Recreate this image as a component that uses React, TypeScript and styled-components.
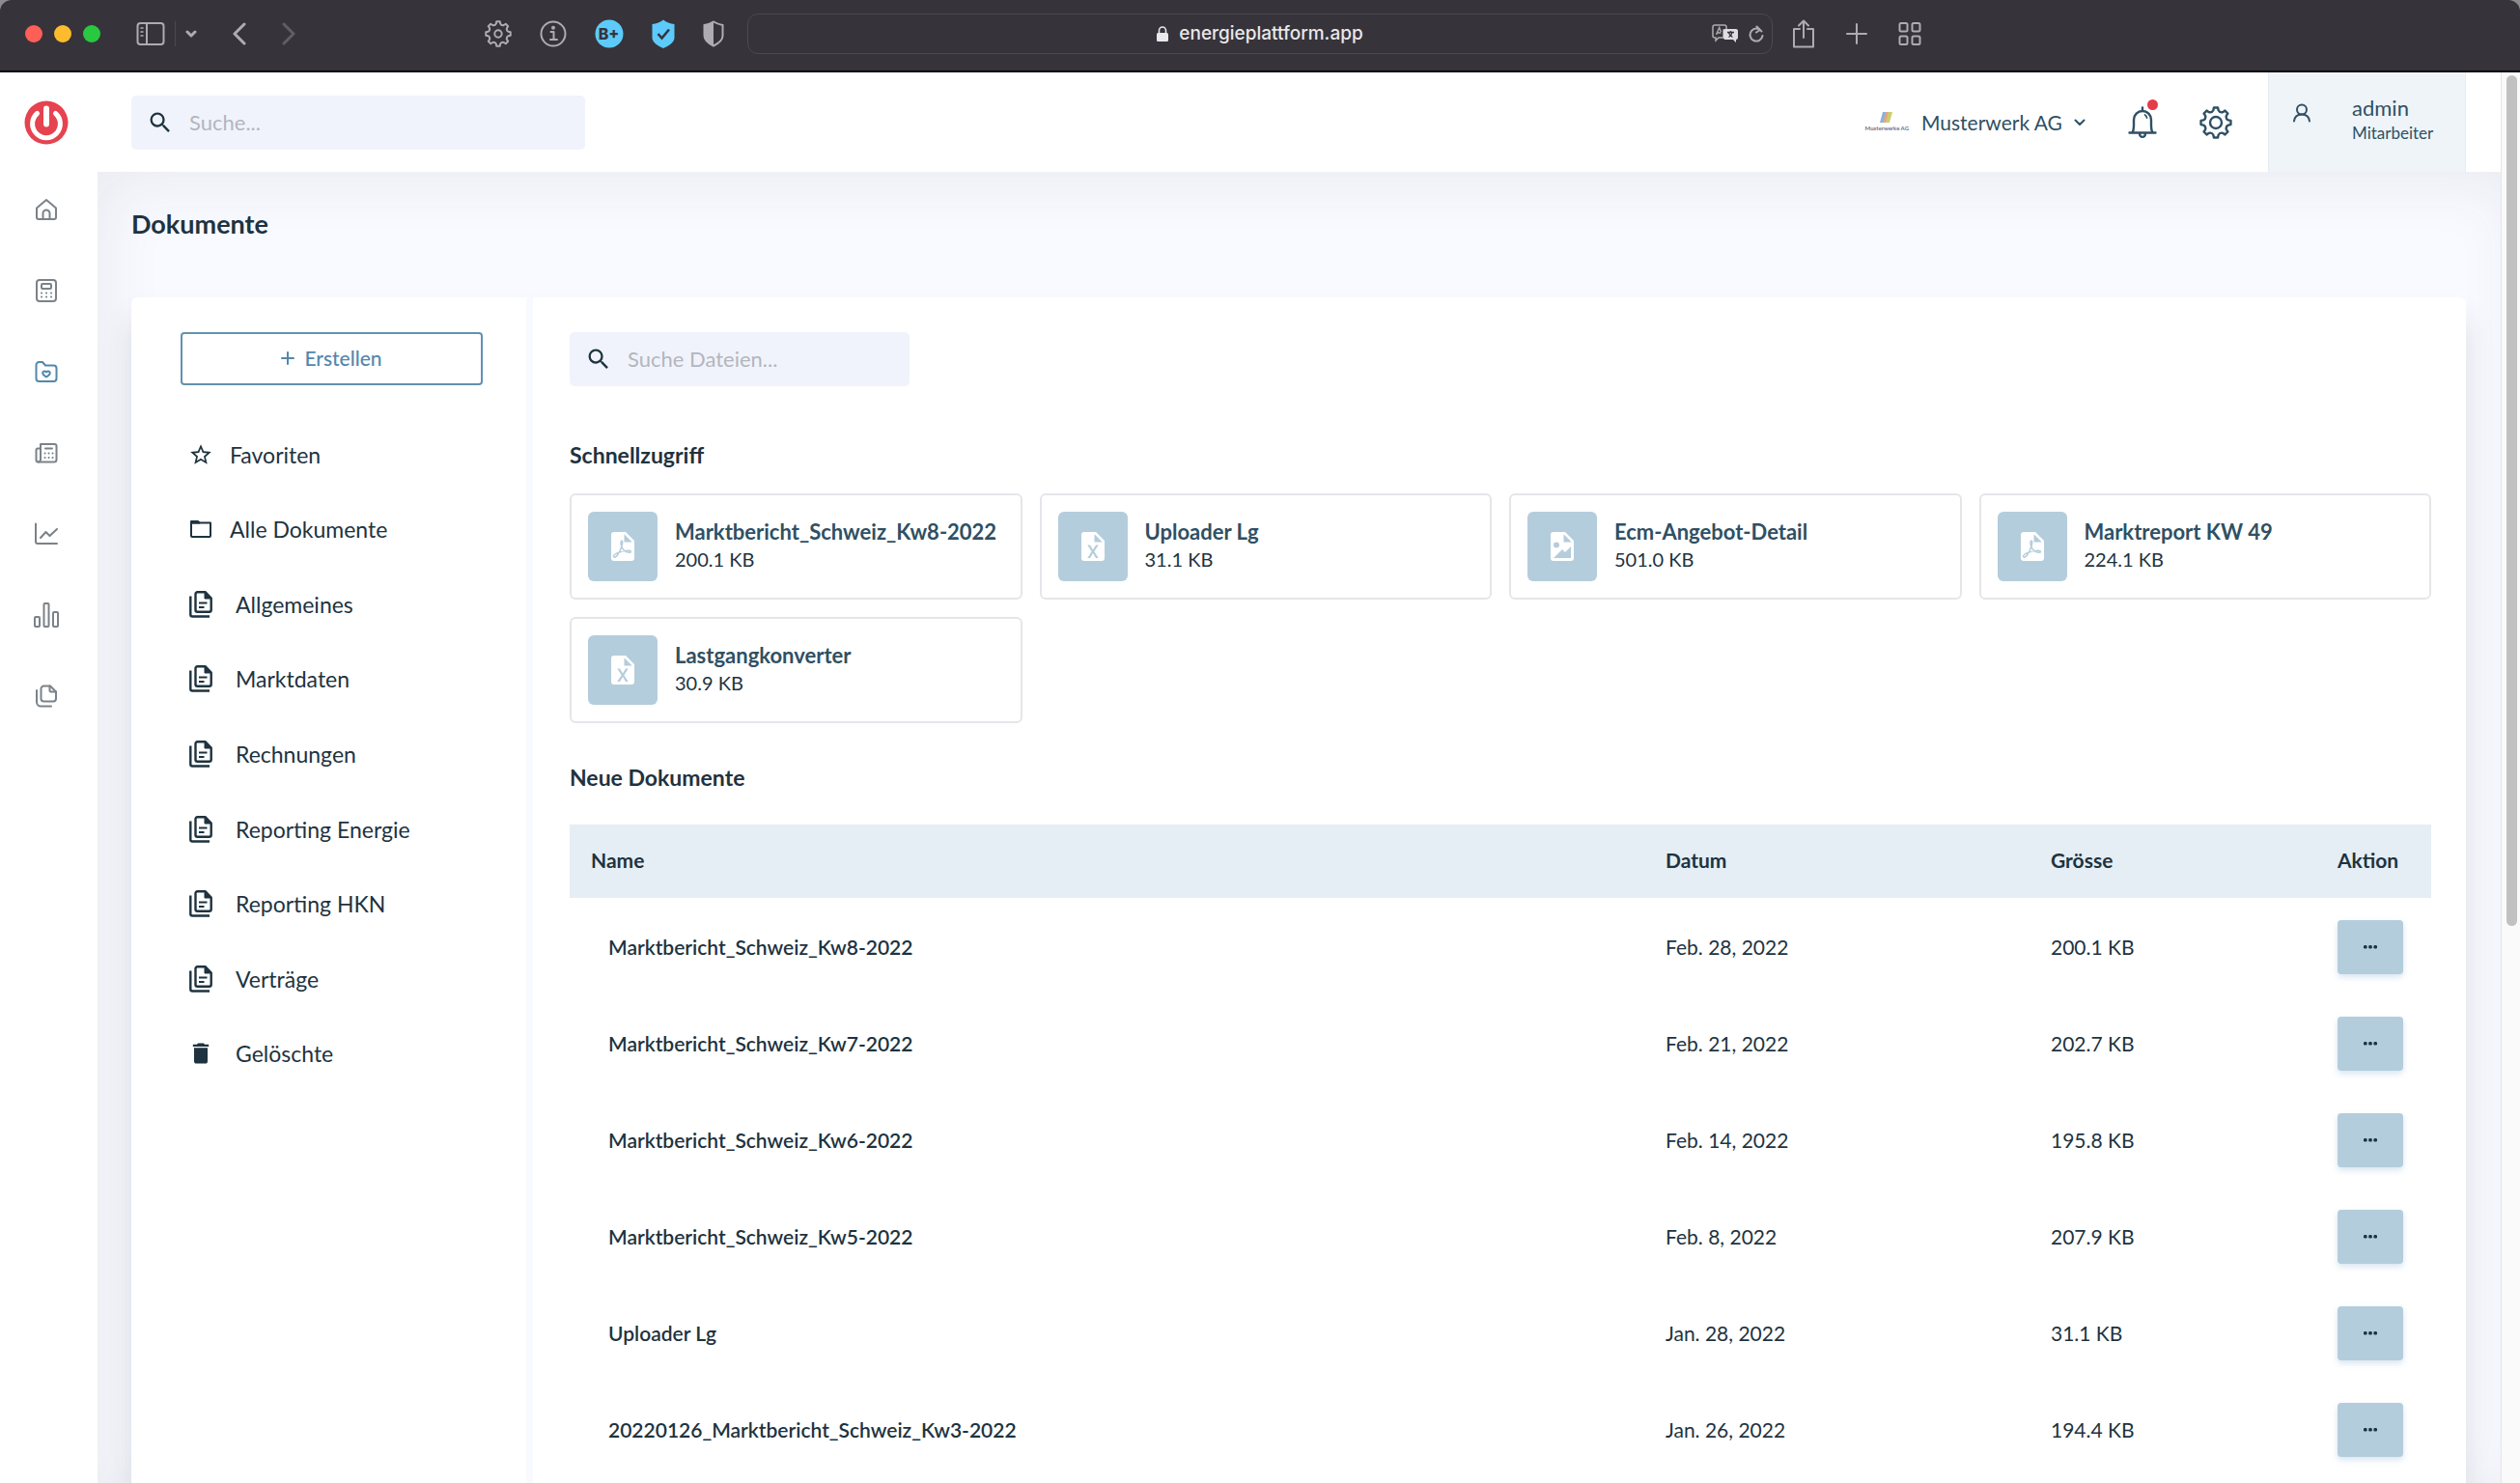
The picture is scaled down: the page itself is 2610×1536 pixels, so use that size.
import React from "react";
import styled, { createGlobalStyle } from "styled-components";
import { MdDelete, MdSearch, MdStarBorder } from "react-icons/md";

const color = {
  ink: "#1e333f",
  slate: "#2f5064",
  accent: "#5288ab",
  tile: "#b4cddc",
  field: "#f0f3fb",
  muted: "#b3b6be",
  chrome: "#37333a",
  chromeIcon: "#aeacb1",
};

const Global = createGlobalStyle`
  * { box-sizing: border-box; }
  body {
    margin: 0;
    background: #8d8b90;
    color: ${color.ink};
    font-family: Lato, "Open Sans", sans-serif;
  }
  button, input, select { font: inherit; color: inherit; }
  h1, h2, ul { margin: 0; padding: 0; }
`;

/* ---------- browser window ---------- */

const Window = styled.div`
  display: flex;
  flex-direction: column;
  height: 100vh;
  overflow: hidden;
`;

const Chrome = styled.header`
  display: grid;
  grid-template-columns: minmax(0, 1fr) minmax(0, 1062px) minmax(0, 1fr);
  align-items: center;
  flex: none;
  height: 75px;
  padding-bottom: 4px;
  background: ${color.chrome};
  border-bottom: 2px solid #060507;
  border-radius: 12px 12px 0 0;
  color: ${color.chromeIcon};
`;

const ChromeSide = styled.div<{ $end?: boolean }>`
  display: flex;
  align-items: center;
  justify-content: ${(p) => (p.$end ? "flex-start" : "space-between")};
  gap: 32px;
  padding: 0 24px 0 ${(p) => (p.$end ? "20px" : "26px")};
`;

const Cluster = styled.div<{ $gap: number }>`
  display: flex;
  align-items: center;
  gap: ${(p) => p.$gap}px;
`;

const Light = styled.button<{ $color: string }>`
  width: 18px;
  height: 18px;
  padding: 0;
  border: 0;
  border-radius: 50%;
  background: ${(p) => p.$color};
`;

const IconButton = styled.button<{ $dim?: boolean }>`
  display: flex;
  position: relative;
  padding: 0;
  border: 0;
  background: none;
  color: inherit;
  opacity: ${(p) => (p.$dim ? 0.35 : 1)};
`;

const Rule = styled.span`
  width: 1px;
  height: 26px;
  background: #4b484f;
`;

const Address = styled.div`
  display: grid;
  grid-template-columns: 1fr auto 1fr;
  align-items: center;
  height: 42px;
  padding: 0 8px;
  border: 1px solid #4b4850;
  border-radius: 11px;
`;

const AddressText = styled.span`
  display: flex;
  align-items: center;
  gap: 11px;
  grid-column: 2;
  color: #e9e8ea;
  font: 500 19px/24px Inter, sans-serif;
`;

const AddressTools = styled(Cluster)`
  justify-self: end;
`;

/* ---------- application shell ---------- */

const Shell = styled.div`
  display: flex;
  flex: 1;
  min-height: 0;
  background: #fff;
`;

const Rail = styled.nav`
  display: flex;
  flex-direction: column;
  align-items: center;
  flex: none;
  width: 101px;
  padding: 29px 6px 0 0;
  color: #7b8289;
`;

const RailList = styled.ul`
  display: flex;
  flex-direction: column;
  align-items: center;
  gap: 60px;
  padding-top: 55px;
  list-style: none;
`;

const RailLink = styled.a<{ $active?: boolean }>`
  display: flex;
  align-items: center;
  height: 24px;
  color: ${(p) => (p.$active ? color.accent : "inherit")};
`;

const Content = styled.div`
  display: flex;
  flex-direction: column;
  flex: 1;
  min-width: 0;
`;

const TopBar = styled.header`
  display: flex;
  align-items: center;
  flex: none;
  height: 103px;
  padding: 0 36px 0 35px;
  color: ${color.slate};
`;

const SearchField = styled.label<{ $width: number }>`
  display: flex;
  align-items: center;
  gap: 16px;
  width: ${(p) => p.$width}px;
  height: 56px;
  padding: 0 16px;
  border-radius: 5px;
  background: ${color.field};
  color: ${color.ink};

  svg { flex: none; }
`;

const SearchInput = styled.input`
  flex: 1;
  min-width: 0;
  padding: 0;
  border: 0;
  outline: 0;
  background: none;
  font-size: 22px;
  line-height: 28px;

  &::placeholder { color: ${color.muted}; opacity: 1; }
`;

const TopTools = styled.div`
  display: flex;
  align-items: center;
  gap: 44px;
  margin: 0 37px 0 auto;
`;

const Company = styled.label`
  display: flex;
  align-items: center;
  gap: 13px;
`;

const CompanyLogo = styled.span`
  display: flex;
  flex-direction: column;
  align-items: center;
  gap: 2px;
  font-size: 6px;
  line-height: 8px;
  font-weight: 700;
  white-space: nowrap;
  color: #6b6f8c;
`;

const SelectBox = styled.span`
  display: flex;
  align-items: center;
  gap: 11px;
`;

const CompanySelect = styled.select`
  appearance: none;
  padding: 0;
  border: 0;
  background: none;
  font-size: 21px;
  line-height: 28px;
`;

const Dot = styled.span`
  position: absolute;
  top: -7px;
  right: -1px;
  width: 11px;
  height: 11px;
  border-radius: 50%;
  background: #e53c48;
`;

const User = styled.a`
  display: flex;
  gap: 42px;
  align-self: stretch;
  width: 205px;
  padding: 24px 24px 0;
  border: solid #e6ecf1;
  border-width: 0 1px;
  background: #eef4f8;
  color: ${color.slate};
  text-decoration: none;

  svg { flex: none; margin-top: 8px; }
`;

const UserText = styled.span`
  display: flex;
  flex-direction: column;
  font-size: 17px;
  line-height: 26px;
`;

const UserName = styled.span`
  font-size: 22px;
`;

const Page = styled.main`
  display: flex;
  flex-direction: column;
  flex: 1;
  min-height: 0;
  padding: 0 36px 0 35px;
  background: #f9faff;
  box-shadow: inset 12px 14px 60px rgba(40, 50, 70, 0.07);
`;

const PageTitle = styled.h1`
  padding: 37px 0 59px;
  font-size: 27px;
  line-height: 34px;
  font-weight: 700;
`;

const Card = styled.div`
  display: flex;
  flex: 1;
  min-height: 0;
  border-radius: 6px 6px 0 0;
  background: #fff;
  box-shadow: 0 24px 32px rgba(30, 40, 55, 0.13);
`;

const Side = styled.aside`
  flex: none;
  width: 416px;
  padding: 36px 45px 0 51px;
  border-right: 7px solid #f9faff;
`;

const CreateButton = styled.button`
  display: flex;
  align-items: center;
  justify-content: center;
  gap: 10px;
  width: 313px;
  height: 55px;
  padding: 0 0 2px;
  border: 2px solid #6391b0;
  border-radius: 4px;
  background: #fff;
  color: ${color.accent};
  font-size: 21px;
  line-height: 28px;
  font-weight: 500;
`;

const FolderList = styled.ul`
  display: grid;
  grid-template-rows: repeat(9, 1fr);
  height: 698px;
  margin-top: 33px;
  padding-left: 9px;
  list-style: none;
`;

const FolderLink = styled.a<{ $wide?: boolean }>`
  display: flex;
  align-items: center;
  gap: ${(p) => (p.$wide ? 24 : 18)}px;
  height: 100%;
  color: ${color.ink};
  font-size: 23px;
  line-height: 30px;
  text-decoration: none;
`;

const FolderGlyph = styled.span`
  display: flex;
  justify-content: center;
  flex: none;
  width: 24px;

  svg { flex: none; }
`;

const Main = styled.section`
  flex: 1;
  min-width: 0;
  padding: 36px 36px 0 38px;
`;

const SectionTitle = styled.h2<{ $first?: boolean }>`
  padding: ${(p) => (p.$first ? "56px" : "41px")} 0 ${(p) => (p.$first ? "25px" : "34px")};
  font-size: 23px;
  line-height: 30px;
  font-weight: 700;
`;

const QuickGrid = styled.div`
  display: grid;
  grid-template-columns: repeat(4, minmax(0, 1fr));
  gap: 18px;
`;

const QuickCard = styled.a`
  display: flex;
  align-items: center;
  gap: 18px;
  height: 110px;
  padding: 0 17px;
  border: 2px solid #e5e6ea;
  border-radius: 6px;
  color: ${color.ink};
  text-decoration: none;
`;

const FileTile = styled.span`
  display: flex;
  align-items: center;
  justify-content: center;
  flex: none;
  width: 72px;
  height: 72px;
  border-radius: 6px;
  background: ${color.tile};
  color: #fff;
`;

const FileText = styled.span`
  display: flex;
  flex-direction: column;
  min-width: 0;
  padding-bottom: 2px;
  font-size: 20px;
  line-height: 28px;
`;

const FileName = styled.strong`
  color: ${color.slate};
  font-size: 22px;
  font-weight: 700;
`;

const Table = styled.table`
  width: 100%;
  border-collapse: collapse;
  table-layout: fixed;
  font-size: 21px;
  line-height: 28px;
  text-align: left;
`;

const HeadCell = styled.th<{ $width?: number; $first?: boolean }>`
  width: ${(p) => (p.$width ? p.$width + "px" : "auto")};
  height: 76px;
  padding: 0 0 2px ${(p) => (p.$first ? 22 : 0)}px;
  background: #e5eef4;
  font-weight: 700;
`;

const Cell = styled.td<{ $name?: boolean }>`
  height: 100px;
  padding: 2px 0 0 ${(p) => (p.$name ? 40 : 0)}px;
  font-weight: ${(p) => (p.$name ? 600 : 400)};
`;

const MoreButton = styled.button`
  display: flex;
  align-items: center;
  justify-content: center;
  width: 68px;
  height: 56px;
  padding: 0;
  border: 0;
  border-radius: 4px;
  background: ${color.tile};
  box-shadow: 0 3px 6px rgba(100, 150, 200, 0.25);
`;

const Scrollbar = styled.div`
  flex: none;
  width: 20px;
  padding: 3px 3px 0 5px;
  border-left: 1px solid #e6e6e8;
  background: #fafafb;
`;

const Thumb = styled.div`
  height: 60.4%;
  border-radius: 6px;
  background: #c1c1c2;
`;

/* ---------- icons ---------- */

function gearPath(c: number, outer: number, inner: number, teeth: number) {
  const step = (Math.PI * 2) / teeth;
  const at = (r: number, a: number) =>
    `${(c + r * Math.cos(a)).toFixed(2)} ${(c + r * Math.sin(a)).toFixed(2)}`;
  let d = "";
  for (let i = 0; i < teeth; i++) {
    const a = i * step - Math.PI / 2;
    d += `${i ? "L" : "M"}${at(outer, a - step * 0.17)} L${at(outer, a + step * 0.17)} `;
    d += `L${at(inner + 1, a + step * 0.26)} Q${at(inner - 1.2, a + step * 0.5)} ${at(inner + 1, a + step * 0.74)} `;
  }
  return d + "Z";
}

type GearProps = { size: number; stroke: number; hole: number };

const Gear = ({ size, stroke, hole }: GearProps) => (
  <svg width={size} height={size} viewBox="0 0 34 34" fill="none" stroke="currentColor" strokeWidth={stroke} strokeLinejoin="round">
    <path d={gearPath(17, 15.6, 12, 8)} />
    <circle cx="17" cy="17" r={hole} />
  </svg>
);

type LineProps = { w: number; h: number; stroke?: number; children: React.ReactNode };

const Line = ({ w, h, stroke = 2, children }: LineProps) => (
  <svg width={w} height={h} viewBox={`0 0 ${w} ${h}`} fill="none" stroke="currentColor" strokeWidth={stroke} strokeLinecap="round" strokeLinejoin="round">
    {children}
  </svg>
);

const PowerLogo = () => (
  <svg width="46" height="46" viewBox="0 0 46 46" fill="none">
    <circle cx="23" cy="23" r="22.5" fill="#e5434f" />
    <path d="M13.500 13.500a14.400 14.400 0 1 0 19 0" stroke="#fff" strokeWidth="5" strokeLinecap="round" />
    <path d="M23 8.500v16" stroke="#fff" strokeWidth="6" strokeLinecap="round" />
  </svg>
);

const HomeIcon = () => (
  <Line w={24} h={24}>
    <path d="M2 10.5 12 2l10 8.500V20a2 2 0 0 1-2 2H4a2 2 0 0 1-2-2Z" />
    <path d="M8.500 22v-6a3.500 3.500 0 0 1 7 0v6" />
  </Line>
);

const CalculatorIcon = () => (
  <Line w={24} h={24}>
    <rect x="2" y="1" width="20" height="22" rx="3" />
    <rect x="7" y="5" width="10" height="5" rx="1" />
    <path strokeWidth="2" d="M7 14.500h.1M12 14.500h.1M17 14.500h.1M7 18.500h.1M12 18.500h.1M17 18.500h.1" />
  </Line>
);

const FolderHeartIcon = () => (
  <Line w={24} h={24}>
    <path d="M1.500 5a3 3 0 0 1 3-3H8l3 3.500h8.500a3 3 0 0 1 3 3V19a3 3 0 0 1-3 3h-15a3 3 0 0 1-3-3Z" />
    <path d="M12 17.500c-2.500-1.500-3.800-2.700-3.800-4.200 0-2 2.600-2.500 3.800-.8 1.200-1.700 3.800-1.200 3.800.8 0 1.500-1.300 2.700-3.800 4.200Z" />
  </Line>
);

const PlannerIcon = () => (
  <Line w={24} h={24}>
    <path d="M6 3h14.500a2 2 0 0 1 2 2v14a2.500 2.500 0 0 1-2.500 2.500H3.500a2 2 0 0 1-2-2V9a1.500 1.500 0 0 1 1.500-1.500h3Z" />
    <path d="M6 7.500v11.500a2.500 2.500 0 0 1-2.500 2.500M11 7.500h7M10.500 12.500h.1M14.500 12.500h.1M18.500 12.500h.1M10.500 17h.1M14.500 17h.1M18.500 17h.1" />
  </Line>
);

const ChartLineIcon = () => (
  <Line w={24} h={24}>
    <path d="M1 1.500V20a2 2 0 0 0 2 2h20" />
    <path d="m6 16 5.500-6 4 4L23 7" />
  </Line>
);

const BarsIcon = () => (
  <Line w={26} h={26}>
    <rect x="1" y="15" width="5" height="10" rx="1" />
    <rect x="10.500" y="1" width="5" height="24" rx="1" />
    <rect x="20" y="10" width="5" height="15" rx="1" />
  </Line>
);

const CopyIcon = () => (
  <Line w={24} h={24}>
    <path d="M6.500 4.500a3 3 0 0 1 3-3H16l6 6v7a3 3 0 0 1-3 3H9.500a3 3 0 0 1-3-3Z" />
    <path d="M15.500 1.500V6A1.500 1.500 0 0 0 17 7.500h5M2 6v12a4.500 4.500 0 0 0 4.500 4.500H17" />
  </Line>
);

const FolderIcon = () => (
  <Line w={24} h={24}>
    <path d="M2 5.500h20v13.500a1 1 0 0 1-1 1H3a1 1 0 0 1-1-1Z" />
    <path d="M2 5.500V4h7l1.500 1.500Z" fill="currentColor" />
  </Line>
);

const DocsIcon = () => (
  <svg width="24" height="28" viewBox="0 0 24 28" fill="none" stroke="currentColor" strokeWidth="2.400" strokeLinejoin="round">
    <path d="M1.300 5.500V24.500a2 2 0 0 0 2 2H21" />
    <path d="M6.500 3.200a2 2 0 0 1 2-2H16.500L22.700 7.500V19.700a2 2 0 0 1-2 2H8.500a2 2 0 0 1-2-2Z" />
    <path d="M16 1.500V8h6.500Z" fill="currentColor" strokeWidth="1" />
    <path d="M10 12.500h8.500M10 17h5.500" strokeWidth="2" />
  </svg>
);

type FileKind = "pdf" | "sheet" | "image";

const FileIcon = ({ kind }: { kind: FileKind }) => (
  <svg width="36" height="36" viewBox="0 0 24 24" fill="none">
    {kind === "pdf" && (
      <>
        <path fill="currentColor" d="M6 2h8l6 6v12a2 2 0 0 1-2 2H6a2 2 0 0 1-2-2V4a2 2 0 0 1 2-2Zm7 1.500V9h5.500Z" />
        <path
          stroke={color.tile}
          strokeWidth="1"
          strokeLinejoin="round"
          d="M5.600 18.800c.2-1 1.900-2.100 4.400-2.900 2.200-.7 4.500-1.100 6.300-1 1.700.1 1.600 1.300.3 1.300-2.300 0-4.600-1.700-5.500-4.300-.5-1.500-.7-3.600 0-3.800.9-.2.800 1.500.4 3-.7 2.700-1.800 5-3.200 6.900-1.100 1.500-2.300 1.900-2.700.8Z"
        />
      </>
    )}
    {kind === "sheet" && (
      <path fill="currentColor" d="M14 2H6a2 2 0 0 0-2 2v16a2 2 0 0 0 2 2h12a2 2 0 0 0 2-2V8l-6-6m1.800 18H14l-2-3.400-2 3.400H8.200l2.900-4.500L8.200 11H10l2 3.400 2-3.400h1.800l-2.900 4.500 2.900 4.500M13 9V3.500L18.500 9H13Z" />
    )}
    {kind === "image" && (
      <path fill="currentColor" d="M13 9h5.500L13 3.500V9M6 2h8l6 6v12a2 2 0 0 1-2 2H6a2 2 0 0 1-2-2V4a2 2 0 0 1 2-2m0 18h12v-8l-4 4-2-2-6 6M8 9a2 2 0 0 0-2 2 2 2 0 0 0 2 2 2 2 0 0 0 2-2 2 2 0 0 0-2-2Z" />
    )}
  </svg>
);

const BellIcon = () => (
  <svg width="30" height="34" viewBox="0 0 30 34" fill="none" stroke="currentColor" strokeWidth="2.400" strokeLinecap="round" strokeLinejoin="round">
    <path d="M1.500 27.500h27M4.500 27.500c1-2 1.500-4 1.500-7V14a9 9 0 0 1 18 0v6.500c0 3 .5 5 1.500 7M15 4.500v-3M12 28.500a3 3.400 0 0 0 6 0" />
    <path d="M17.500 9c1.200.6 1.800 1.500 2 3" strokeWidth="1.800" />
  </svg>
);

const MoreIcon = () => (
  <svg width="16" height="4" viewBox="0 0 16 4" fill={color.ink}>
    <rect x="1" y="0" width="3.600" height="3.600" rx="1.400" />
    <rect x="6.200" y="0" width="3.600" height="3.600" rx="1.400" />
    <rect x="11.400" y="0" width="3.600" height="3.600" rx="1.400" />
  </svg>
);

const Flag = () => (
  <svg width="14" height="11" viewBox="0 0 14 11">
    <path d="M3 0h4L4 11H0Z" fill="#86b4dc" />
    <path d="M6 0h4L7 11H3Z" fill="#e0a58b" />
    <path d="M9 0h4l-3 11H6Z" fill="#c9cf6c" />
  </svg>
);

/* ---------- data ---------- */

const railItems = [
  { label: "Startseite", icon: <HomeIcon /> },
  { label: "Rechner", icon: <CalculatorIcon /> },
  { label: "Dokumente", icon: <FolderHeartIcon />, active: true },
  { label: "Planung", icon: <PlannerIcon /> },
  { label: "Markt", icon: <ChartLineIcon /> },
  { label: "Statistik", icon: <BarsIcon /> },
  { label: "Kopien", icon: <CopyIcon /> },
];

const folders = [
  { label: "Favoriten", icon: <MdStarBorder size={26} /> },
  { label: "Alle Dokumente", icon: <FolderIcon /> },
  ...["Allgemeines", "Marktdaten", "Rechnungen", "Reporting Energie", "Reporting HKN", "Verträge"].map((label) => ({
    label,
    icon: <DocsIcon />,
    wide: true,
  })),
  { label: "Gelöschte", icon: <MdDelete size={28} />, wide: true },
] as { label: string; icon: React.ReactNode; wide?: boolean }[];

const quick: { name: string; size: string; kind: FileKind }[] = [
  { name: "Marktbericht_Schweiz_Kw8-2022", size: "200.1 KB", kind: "pdf" },
  { name: "Uploader Lg", size: "31.1 KB", kind: "sheet" },
  { name: "Ecm-Angebot-Detail", size: "501.0 KB", kind: "image" },
  { name: "Marktreport KW 49", size: "224.1 KB", kind: "pdf" },
  { name: "Lastgangkonverter", size: "30.9 KB", kind: "sheet" },
];

const documents = [
  ["Marktbericht_Schweiz_Kw8-2022", "Feb. 28, 2022", "200.1 KB"],
  ["Marktbericht_Schweiz_Kw7-2022", "Feb. 21, 2022", "202.7 KB"],
  ["Marktbericht_Schweiz_Kw6-2022", "Feb. 14, 2022", "195.8 KB"],
  ["Marktbericht_Schweiz_Kw5-2022", "Feb. 8, 2022", "207.9 KB"],
  ["Uploader Lg", "Jan. 28, 2022", "31.1 KB"],
  ["20220126_Marktbericht_Schweiz_Kw3-2022", "Jan. 26, 2022", "194.4 KB"],
];

/* ---------- sections ---------- */

const BrowserBar = () => (
  <Chrome>
    <ChromeSide>
      <Cluster $gap={37}>
        <Cluster $gap={12}>
          <Light $color="#fe5f57" aria-label="Schliessen" />
          <Light $color="#febb2e" aria-label="Minimieren" />
          <Light $color="#28c840" aria-label="Maximieren" />
        </Cluster>
        <Cluster $gap={10}>
          <IconButton aria-label="Seitenleiste">
            <Line w={30} h={26}>
              <rect x="1.500" y="2" width="27" height="22" rx="3" />
              <path d="M11 2v22" />
              <path strokeWidth="1.500" d="M5 7h2M5 11h2M5 15h2" />
            </Line>
          </IconButton>
          <Rule />
          <IconButton aria-label="Tabgruppen">
            <Line w={12} h={8} stroke={3}><path d="m2 2 4 4 4-4" /></Line>
          </IconButton>
        </Cluster>
        <IconButton aria-label="Zurück">
          <Line w={14} h={24} stroke={3}><path d="M12 2 2 12l10 10" /></Line>
        </IconButton>
        <IconButton $dim aria-label="Vorwärts">
          <Line w={14} h={24} stroke={3}><path d="m2 2 10 10L2 22" /></Line>
        </IconButton>
      </Cluster>
      <Cluster $gap={29}>
        <IconButton aria-label="Einstellungen"><Gear size={28} stroke={2.4} hole={4.5} /></IconButton>
        <IconButton aria-label="Information">
          <Line w={28} h={28}>
            <circle cx="14" cy="14" r="12.500" />
            <path d="M11.500 12h3v8M11 20h7" />
            <circle cx="14" cy="7.800" r="1" fill="currentColor" />
          </Line>
        </IconButton>
        <IconButton aria-label="B+">
          <svg width="30" height="30" viewBox="0 0 30 30">
            <circle cx="15" cy="15" r="14.500" fill="#5ccbfb" />
            <text x="14.500" y="20.500" textAnchor="middle" fontFamily="Inter, sans-serif" fontWeight="800" fontSize="16" fill={color.chrome}>B+</text>
          </svg>
        </IconButton>
        <IconButton aria-label="Schutz">
          <svg width="24" height="30" viewBox="0 0 24 30" fill="none">
            <path d="M12 .5c3 2.700 7 4 11.500 4.500v14c0 5-6 8.500-11.500 11C6.500 27.500.5 24 .5 19V5C5 4.500 9 3.200 12 .5Z" fill="#5ccbfb" />
            <path d="m6.500 15 4 4.500 7.500-9" stroke={color.chrome} strokeWidth="2.600" />
          </svg>
        </IconButton>
        <IconButton aria-label="Datenschutzbericht">
          <svg width="22" height="28" viewBox="0 0 22 28" fill="none">
            <path d="M11 1.500c2.500 1.500 5.500 2.700 9.500 3.500v11c0 5-4.500 8-9.500 10.500C6 24 1.500 21 1.500 16V5c4-.8 7-2 9.500-3.500Z" stroke="currentColor" strokeWidth="2" />
            <path d="M11 1.500V26.500C6 24 1.500 21 1.500 16V5c4-.8 7-2 9.500-3.500Z" fill="currentColor" />
          </svg>
        </IconButton>
      </Cluster>
    </ChromeSide>
    <Address>
      <AddressText>
        <svg width="12" height="16" viewBox="0 0 12 16" fill="none">
          <rect x="0" y="7" width="12" height="9" rx="1.500" fill="currentColor" />
          <path d="M2.500 8V4.500a3.500 3.500 0 0 1 7 0V8" stroke="currentColor" strokeWidth="1.600" />
        </svg>
        energieplattform.app
      </AddressText>
      <AddressTools $gap={10}>
        <IconButton aria-label="Übersetzen">
          <svg width="28" height="20" viewBox="0 0 28 20" fill="none">
            <path d="M3 1h10a2 2 0 0 1 2 2v3h-3v8H7l-3 3v-3H3a2 2 0 0 1-2-2V3a2 2 0 0 1 2-2Z" stroke="currentColor" strokeWidth="1.500" />
            <path d="m4.500 11 3.200-7.500L9.500 8M5.500 9h4" stroke="currentColor" strokeWidth="1.400" />
            <path d="M14 5h11a2 2 0 0 1 2 2v7a2 2 0 0 1-2 2v3l-3-3h-8a2 2 0 0 1-2-2V7a2 2 0 0 1 2-2Z" fill="#dedde0" />
            <path d="M16 8.500h7M19.500 7v1.500M17.500 13.500c2-1 3-2.500 3.500-5M17.500 9c1 2.500 2 3.800 4 4.500" stroke={color.chrome} strokeWidth="1.300" />
          </svg>
        </IconButton>
        <IconButton aria-label="Neu laden">
          <Line w={16} h={18}>
            <path d="M13.500 6.500A6.500 6.500 0 1 0 14.500 11M8.500 1.500 12 5 8 7.500" />
          </Line>
        </IconButton>
      </AddressTools>
    </Address>
    <ChromeSide $end>
      <IconButton aria-label="Teilen">
        <Line w={24} h={30}>
          <path d="M8 10H2v18.500h20V10h-6M12 19V2M7 6.500 12 1.500l5 5" />
        </Line>
      </IconButton>
      <IconButton aria-label="Neuer Tab">
        <Line w={22} h={22}><path d="M11 1v20M1 11h20" /></Line>
      </IconButton>
      <IconButton aria-label="Tabübersicht">
        <Line w={24} h={26}>
          <rect x="1.500" y="2" width="8" height="8.500" rx="1.500" />
          <rect x="14.500" y="2" width="8" height="8.500" rx="1.500" />
          <rect x="1.500" y="15.500" width="8" height="8.500" rx="1.500" />
          <rect x="14.500" y="15.500" width="8" height="8.500" rx="1.500" />
        </Line>
      </IconButton>
    </ChromeSide>
  </Chrome>
);

const Header = () => (
  <TopBar>
    <SearchField $width={470}>
      <MdSearch size={28} />
      <SearchInput type="search" placeholder="Suche..." aria-label="Suche" />
    </SearchField>
    <TopTools>
      <Company>
        <CompanyLogo>
          <Flag />
          Musterwerke AG
        </CompanyLogo>
        <SelectBox>
          <CompanySelect aria-label="Firma">
            <option>Musterwerk AG</option>
          </CompanySelect>
          <Line w={12} h={8}><path d="m1.500 1.500 4.500 4.500 4.500-4.500" /></Line>
        </SelectBox>
      </Company>
      <IconButton aria-label="Benachrichtigungen">
        <BellIcon />
        <Dot />
      </IconButton>
      <IconButton aria-label="Einstellungen"><Gear size={34} stroke={2.4} hole={6} /></IconButton>
    </TopTools>
    <User href="#profil">
      <Line w={20} h={20}>
        <circle cx="10" cy="6.500" r="5" />
        <path d="M2 18.500c.5-4.500 3.500-7 8-7s7.500 2.500 8 7" />
      </Line>
      <UserText>
        <UserName>admin</UserName>
        Mitarbeiter
      </UserText>
    </User>
  </TopBar>
);

const FolderPanel = () => (
  <Side>
    <CreateButton>
      <Line w={14} h={14}><path d="M7 1v12M1 7h12" /></Line>
      Erstellen
    </CreateButton>
    <FolderList>
      {folders.map((f) => (
        <li key={f.label}>
          <FolderLink href="#ordner" $wide={f.wide}>
            <FolderGlyph>{f.icon}</FolderGlyph>
            {f.label}
          </FolderLink>
        </li>
      ))}
    </FolderList>
  </Side>
);

const DocumentPanel = () => (
  <Main>
    <SearchField $width={352}>
      <MdSearch size={28} />
      <SearchInput type="search" placeholder="Suche Dateien..." aria-label="Suche Dateien" />
    </SearchField>
    <SectionTitle $first>Schnellzugriff</SectionTitle>
    <QuickGrid>
      {quick.map((q) => (
        <QuickCard key={q.name} href="#datei">
          <FileTile><FileIcon kind={q.kind} /></FileTile>
          <FileText>
            <FileName>{q.name}</FileName>
            {q.size}
          </FileText>
        </QuickCard>
      ))}
    </QuickGrid>
    <SectionTitle>Neue Dokumente</SectionTitle>
    <Table>
      <thead>
        <tr>
          <HeadCell $first>Name</HeadCell>
          <HeadCell $width={399}>Datum</HeadCell>
          <HeadCell $width={297}>Grösse</HeadCell>
          <HeadCell $width={97}>Aktion</HeadCell>
        </tr>
      </thead>
      <tbody>
        {documents.map(([name, date, size]) => (
          <tr key={name}>
            <Cell $name>{name}</Cell>
            <Cell>{date}</Cell>
            <Cell>{size}</Cell>
            <Cell>
              <MoreButton aria-label={`Aktionen für ${name}`}><MoreIcon /></MoreButton>
            </Cell>
          </tr>
        ))}
      </tbody>
    </Table>
  </Main>
);

export default function App() {
  return (
    <Window>
      <Global />
      <BrowserBar />
      <Shell>
        <Rail aria-label="Hauptnavigation">
          <PowerLogo />
          <RailList>
            {railItems.map((r) => (
              <li key={r.label}>
                <RailLink href="#nav" aria-label={r.label} $active={r.active}>{r.icon}</RailLink>
              </li>
            ))}
          </RailList>
        </Rail>
        <Content>
          <Header />
          <Page>
            <PageTitle>Dokumente</PageTitle>
            <Card>
              <FolderPanel />
              <DocumentPanel />
            </Card>
          </Page>
        </Content>
        <Scrollbar>
          <Thumb />
        </Scrollbar>
      </Shell>
    </Window>
  );
}
